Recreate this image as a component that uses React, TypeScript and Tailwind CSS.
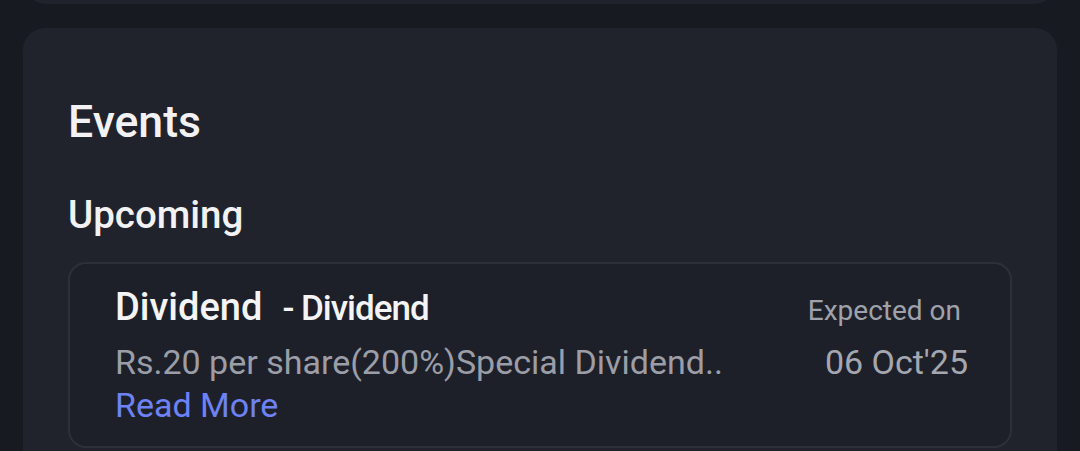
export default function App() {
  return (
    <div className="h-[451px] w-[1080px] overflow-hidden bg-[#181a22] font-['Roboto','Liberation_Sans',sans-serif]">
      {/* previous card, only its bottom edge is visible */}
      <div className="mx-[23px] -mt-[40px] h-[44px] rounded-b-[24px] bg-[#21232c]" />

      <div className="mx-[23px] mt-[24px] rounded-[22px] bg-[#21232c] px-[45px] pt-[68px] pb-[40px]">
        <h2 className="text-[44.6px] leading-[52px] font-medium text-[#f2f2f5]">Events</h2>
        <h3 className="mt-[44px] text-[38.5px] leading-[46px] font-medium text-[#f2f2f5]">Upcoming</h3>

        <div className="mt-[24px] flex justify-between rounded-[18px] border-2 border-[#2d3039] bg-[#1e2029] pl-[45px] pr-[42px] pt-[19px] pb-[20px]">
          <div className="flex flex-col">
            <div className="flex items-baseline">
              <span className="text-[38px] leading-[48px] font-medium text-[#f4f4f7]">Dividend</span>
              <span className="ml-[20px] text-[35px] leading-[48px] tracking-[-1px] font-medium text-[#f4f4f7]">- Dividend</span>
            </div>
            <span className="mt-[7px] text-[34px] leading-[44px] text-[#9b9ea7]">Rs.20 per share(200%)Special Dividend..</span>
            <span className="text-[34px] leading-[42px] text-[#6d82f4]">Read More</span>
          </div>
          <div className="flex flex-col items-end">
            <span className="mt-[10px] mr-[7px] text-[28px] leading-[36px] text-[#9fa2aa]">Expected on</span>
            <span className="mt-[13px] text-[34px] leading-[40px] text-[#a4a7af]">06 Oct'25</span>
          </div>
        </div>
      </div>
    </div>
  );
}
